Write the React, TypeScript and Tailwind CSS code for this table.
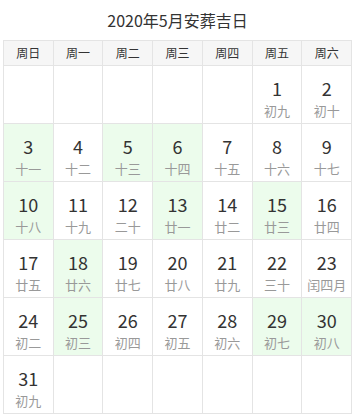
import React from 'react'

const weekdays = ['周日', '周一', '周二', '周三', '周四', '周五', '周六']

const lunar: Record<number, string> = {
  1: '初九', 2: '初十', 3: '十一', 4: '十二', 5: '十三', 6: '十四', 7: '十五',
  8: '十六', 9: '十七', 10: '十八', 11: '十九', 12: '二十', 13: '廿一', 14: '廿二',
  15: '廿三', 16: '廿四', 17: '廿五', 18: '廿六', 19: '廿七', 20: '廿八', 21: '廿九',
  22: '三十', 23: '闰四月', 24: '初二', 25: '初三', 26: '初四', 27: '初五', 28: '初六',
  29: '初七', 30: '初八', 31: '初九',
}

// 吉日
const goodDays = [3, 5, 6, 10, 13, 15, 18, 25, 29, 30]

// May 2020 starts on Friday
const cells: (number | null)[] = [
  ...Array(5).fill(null),
  ...Array.from({ length: 31 }, (_, i) => i + 1),
]
while (cells.length % 7) cells.push(null)

export default function App() {
  return (
    <div className="w-[357px] h-[418px] bg-white font-['Noto_Sans_CJK_SC',sans-serif]">
      <div className="ml-[3px] w-[349px]">
        <h1 className="h-[40px] flex items-center justify-center text-[16px] text-[#333]">
          2020年5月安葬吉日
        </h1>
        <div className="grid grid-cols-7 border-l border-t border-[#e4e4e4]">
          {weekdays.map(w => (
            <div
              key={w}
              className="h-[25px] flex items-center justify-center bg-[#f6f6f6] border-r border-b border-[#e4e4e4] text-[12px] text-[#333]"
            >
              {w}
            </div>
          ))}
          {cells.map((d, i) => (
            <div
              key={i}
              className={`h-[58px] flex flex-col items-center pt-[11px] border-r border-b border-[#e4e4e4] ${
                d && goodDays.includes(d) ? 'bg-[#ecfcec]' : 'bg-white'
              }`}
            >
              {d && (
                <>
                  <span className="text-[18px] leading-[22px] text-[#333]">{d}</span>
                  <span className="mt-[4px] text-[13px] leading-[16px] text-[#999]">{lunar[d]}</span>
                </>
              )}
            </div>
          ))}
        </div>
      </div>
    </div>
  )
}
